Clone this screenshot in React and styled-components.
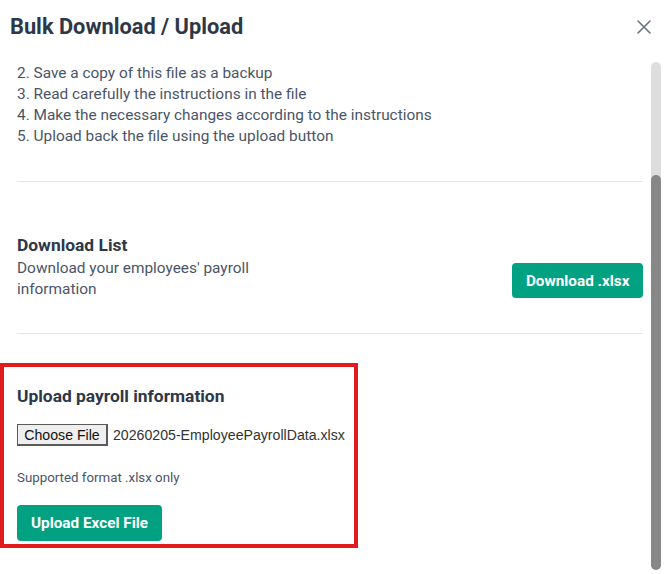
import React from 'react';
import styled, { createGlobalStyle } from 'styled-components';

const GlobalStyle = createGlobalStyle`
  html, body {
    margin: 0;
    padding: 0;
    background: #ffffff;
  }
  body {
    font-family: Roboto, "Liberation Sans", Arial, sans-serif;
  }
`;

const Modal = styled.div`
  width: 661px;
  height: 574px;
  display: flex;
  flex-direction: column;
  background: #ffffff;
`;

const Header = styled.div`
  height: 62px;
  flex-shrink: 0;
  display: flex;
  justify-content: space-between;
  align-items: flex-start;
  padding: 14px 5px 0 10px;
  box-sizing: border-box;
`;

const Title = styled.h1`
  margin: 0;
  font-size: 21.8px;
  line-height: 26px;
  font-weight: 700;
  color: #2d3748;
`;

const CloseButton = styled.button`
  width: 24px;
  height: 24px;
  margin-top: 1px;
  padding: 0;
  border: none;
  background: transparent;
  display: flex;
  align-items: center;
  justify-content: center;
  cursor: pointer;
`;

const Main = styled.div`
  height: 508px;
  display: flex;
  overflow: hidden;
`;

const Content = styled.div`
  flex: 1;
  padding: 1px 8px 0 17px;
  color: #4a5568;
`;

const ScrollTrack = styled.div`
  width: 10px;
  flex-shrink: 0;
  display: flex;
  flex-direction: column;
  justify-content: flex-end;
  background: #dedede;
  border-radius: 5px;
`;

const ScrollThumb = styled.div`
  height: 395px;
  background: #878787;
  border-radius: 5px;
`;

const Steps = styled.ol`
  list-style: none;
  margin: 0;
  padding: 0 0 34px;
  border-bottom: 1px solid #e2e8f0;
`;

const Step = styled.li`
  font-size: 15.4px;
  line-height: 21px;
  color: #4a5568;
`;

const DownloadRow = styled.div`
  display: flex;
  justify-content: space-between;
  align-items: flex-end;
  padding: 53px 0 33px;
  border-bottom: 1px solid #e2e8f0;
`;

const Info = styled.div`
  width: 264px;
`;

const SectionTitle = styled.h4`
  margin: 0 0 ${p => p.$gap || 3}px;
  font-size: 17.4px;
  line-height: 20px;
  font-weight: 700;
  color: #2d3748;
`;

const Description = styled.p`
  margin: 0;
  font-size: 15.4px;
  line-height: 21px;
  color: #4a5568;
`;

const Button = styled.button`
  height: ${p => p.$tall ? '36px' : '35px'};
  padding: 0 ${p => p.$tall ? 14 : 13.5}px;
  margin-bottom: 2px;
  border: none;
  border-radius: 4px;
  background: #02a182;
  color: #ffffff;
  font-family: Roboto, sans-serif;
  font-size: 15.3px;
  font-weight: 700;
  cursor: pointer;
`;

const Highlight = styled.div`
  margin: 29px 0 0 -17px;
  width: 358px;
  box-sizing: border-box;
  border: 4px solid #e21b1f;
  padding: 19px 0 1px 13px;
`;

const FileRow = styled.div`
  display: flex;
  align-items: center;
  gap: 5px;
  height: 22px;
  font-family: "Liberation Sans", Arial, sans-serif;
  font-size: 14.15px;
  color: #333333;
`;

const ChooseButton = styled.label`
  height: 22px;
  width: 91px;
  box-sizing: border-box;
  display: flex;
  align-items: center;
  justify-content: center;
  background: #efefef;
  border: 1px solid #5a5a5a;
  border-right-width: 2px;
  border-bottom-width: 2px;
  color: #111111;
  cursor: pointer;
`;

const Hint = styled.p`
  margin: 23px 0 19px;
  font-size: 13.3px;
  line-height: 17px;
  color: #4a5568;
`;

export default function App() {
  return (
    <>
      <GlobalStyle />
      <Modal>
        <Header>
          <Title>Bulk Download / Upload</Title>
          <CloseButton aria-label="Close">
            <svg width="16" height="16" viewBox="0 0 16 16">
              <path d="M2 2 L14 14 M14 2 L2 14" stroke="#6b7280" strokeWidth="1.6" strokeLinecap="round" />
            </svg>
          </CloseButton>
        </Header>
        <Main>
          <Content>
            <Steps>
              <Step>2. Save a copy of this file as a backup</Step>
              <Step>3. Read carefully the instructions in the file</Step>
              <Step>4. Make the necessary changes according to the instructions</Step>
              <Step>5. Upload back the file using the upload button</Step>
            </Steps>

            <DownloadRow>
              <Info>
                <SectionTitle>Download List</SectionTitle>
                <Description>Download your employees' payroll information</Description>
              </Info>
              <Button>Download .xlsx</Button>
            </DownloadRow>

            <Highlight>
              <SectionTitle $gap={18}>Upload payroll information</SectionTitle>
              <FileRow>
                <ChooseButton>Choose File</ChooseButton>
                <span>20260205-EmployeePayrollData.xlsx</span>
              </FileRow>
              <Hint>Supported format .xlsx only</Hint>
              <Button $tall>Upload Excel File</Button>
            </Highlight>
          </Content>
          <ScrollTrack>
            <ScrollThumb />
          </ScrollTrack>
        </Main>
      </Modal>
    </>
  );
}
